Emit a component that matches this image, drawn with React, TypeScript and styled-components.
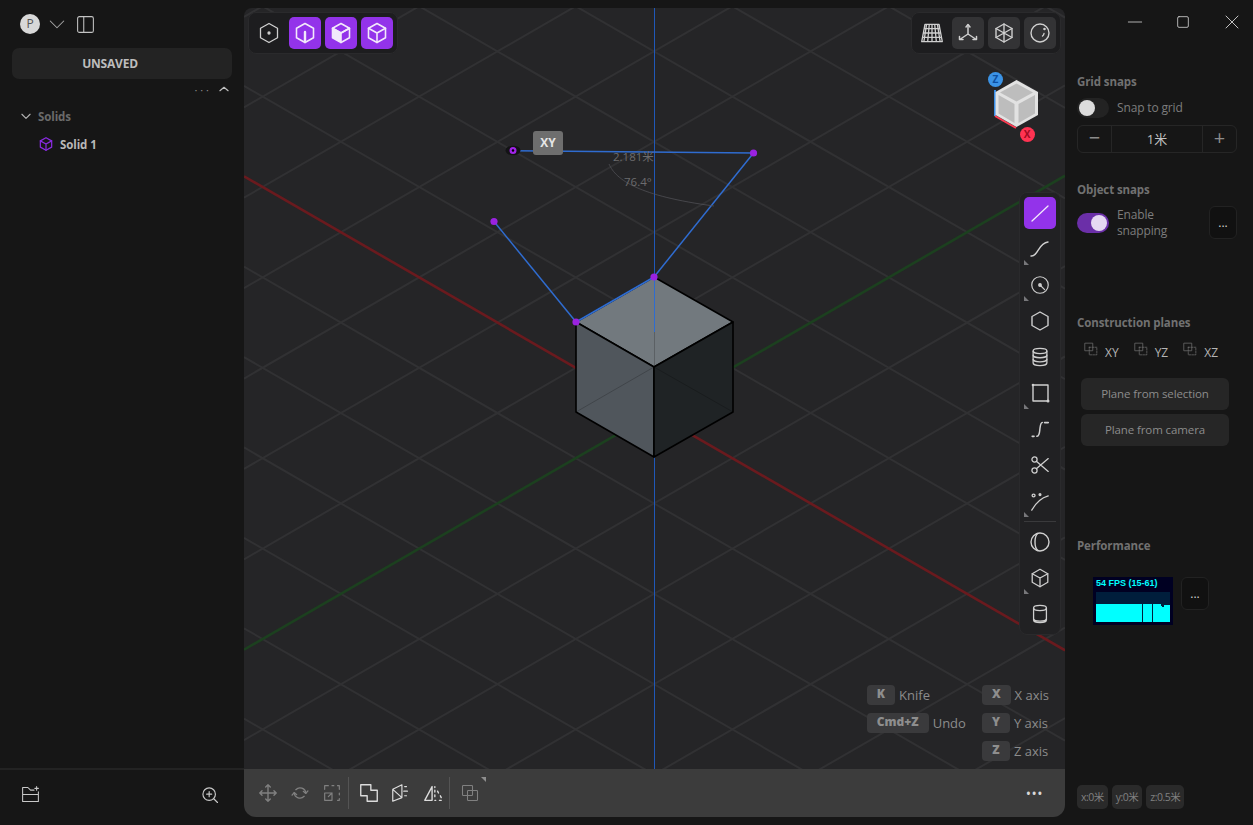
import React, { type ReactElement, type ReactNode } from 'react';
import styled, { createGlobalStyle } from 'styled-components';

const GlobalStyle = createGlobalStyle`
  html, body, #root {
    margin: 0;
    height: 100%;
    background: #161616;
  }
  body {
    overflow: hidden;
    font-family: "Open Sans", "Noto Sans CJK SC", sans-serif;
    color: #d0d0d0;
  }
`;

const Icon = ({ size = 24, sw = 1.5, children }: { size?: number; sw?: number; children: ReactNode }): ReactElement => (
  <svg width={size} height={size} viewBox="0 0 24 24" fill="none" stroke="currentColor" strokeWidth={sw} strokeLinecap="round" strokeLinejoin="round">
    {children}
  </svg>
);

const hex = 'M12 2.5l8.5 4.8v9.4L12 21.5l-8.5-4.8V7.3z';
const cubeEdges = 'M3.5 7.3L12 12l8.5-4.7M12 12v9.5';

// grid + axes of the 3d view, coordinates are local to the viewport
const ORIGIN = { x: 410, y: 405 };
const W = 821;
const H = 761;
const SLOPE = 0.5774;
const STEP = 90.4;

const gridLines = (): ReactElement[] => {
  const lines: ReactElement[] = [];
  for (let k = -12; k <= 12; k++) {
    if (k === 0) continue;
    const off = ORIGIN.y + k * STEP;
    lines.push(
      <line key={`a${k}`} x1={0} y1={off - ORIGIN.x * SLOPE} x2={W} y2={off + (W - ORIGIN.x) * SLOPE} />,
      <line key={`b${k}`} x1={0} y1={off + ORIGIN.x * SLOPE} x2={W} y2={off - (W - ORIGIN.x) * SLOPE} />,
    );
  }
  return lines;
};

const Scene = (): ReactElement => (
  <SceneSvg viewBox={`0 0 ${W} ${H}`}>
    <g stroke="#313133" strokeWidth={2}>{gridLines()}</g>
    <line x1={0} y1={ORIGIN.y - ORIGIN.x * SLOPE} x2={W} y2={ORIGIN.y + (W - ORIGIN.x) * SLOPE} stroke="#6a1a1e" strokeWidth={2.6} />
    <line x1={0} y1={ORIGIN.y + ORIGIN.x * SLOPE} x2={W} y2={ORIGIN.y - (W - ORIGIN.x) * SLOPE} stroke="#1c401f" strokeWidth={2.6} />
    <line x1={410.5} y1={0} x2={410.5} y2={H} stroke="#2058b8" strokeWidth={1} />
    <g stroke="#000" strokeWidth={1.6} strokeLinejoin="round">
      <path d="M410 269L489 314L410 359L332 314z" fill="#72797e" />
      <path d="M332 314L410 359V449L332 404z" fill="#50565c" />
      <path d="M410 359L489 314V404L410 449z" fill="#1f2325" />
    </g>
    <path d="M410.5 269V324" stroke="#2f6cd0" strokeWidth={1} />
    <path d="M410.5 324V359M332 404L410 359L489 404" stroke="#000" strokeWidth={1} opacity={0.2} fill="none" />
    <g stroke="#2f6cd0" strokeWidth={1.5} fill="none">
      <path d="M332 314L410 269" strokeWidth={2} />
      <path d="M250 213.5L332 314" />
      <path d="M410 269L509.5 145" />
      <path d="M270 142.8L509.5 145" />
    </g>
    <path d="M365 156C372 172 395 188 470 198" fill="none" stroke="#55555a" strokeWidth={0.7} />
    <ellipse cx={269} cy={142.5} rx={7.5} ry={4.8} fill="#131315" />
    <circle cx={269} cy={142.5} r={2.4} fill="#000" stroke="#a024e8" strokeWidth={2.2} />
    <g fill="#9a22e0">
      <circle cx={250} cy={213.5} r={3.6} />
      <circle cx={509.5} cy={145} r={3.6} />
      <circle cx={410} cy={269} r={3.6} />
      <circle cx={332} cy={314} r={3.6} />
    </g>
  </SceneSvg>
);

const NavCube = (): ReactElement => (
  <NavCubeBox>
    <svg width="62" height="78" viewBox="0 0 62 78">
      <path d="M7 27V53" stroke="#3b8fe8" strokeWidth={2} />
      <path d="M7 53L28 65" stroke="#ff3b52" strokeWidth={2} />
      <path d="M28.5 17L50 29V52L28.5 64L7.5 52V29z" fill="#e2e2e2" />
      <path d="M28.5 20.5L45 29.5L28.5 38.5L12 29.5z" fill="#bdbdbd" />
      <path d="M10.5 32L26.5 41V60L10.5 50.5z" fill="#bdbdbd" />
      <path d="M30.5 41L47 32V50.5L30.5 60z" fill="#bdbdbd" />
    </svg>
    <AxisBall $bg="#3b93e6" $top={8.5} $left={0} $fg="#0d4fa0">Z</AxisBall>
    <AxisBall $bg="#ff3352" $top={63.5} $left={31.5} $fg="#a00a22">X</AxisBall>
  </NavCubeBox>
);

const App = (): ReactElement => (
  <>
    <GlobalStyle />
    <Shell>
      <LeftPanel>
        <LeftHead>
          <Avatar>P</Avatar>
          <HeadIcon>
            <Icon size={18} sw={1.4}><path d="M3 8l9 9 9-9" /></Icon>
          </HeadIcon>
          <PanelToggle>
            <Icon size={21} sw={1.2}>
              <rect x="3" y="3" width="18" height="18" rx="2" />
              <path d="M10 3v18" />
            </Icon>
          </PanelToggle>
        </LeftHead>
        <UnsavedBar>UNSAVED</UnsavedBar>
        <TreeTools>
          <Dots>· · ·</Dots>
          <Icon size={14} sw={2}><path d="M5 15l7-6 7 6" /></Icon>
        </TreeTools>
        <TreeGroup>
          <Icon size={14} sw={2}><path d="M5 9l7 7 7-7" /></Icon>
          <span>Solids</span>
        </TreeGroup>
        <TreeItem>
          <PurpleIcon>
            <Icon size={16} sw={1.8}>
              <path d={hex} />
              <path d={cubeEdges} />
            </Icon>
          </PurpleIcon>
          <span>Solid 1</span>
        </TreeItem>
        <LeftFoot>
          <FootIcon>
            <Icon size={21} sw={1.2}>
              <path d="M3 20V4h6l3 3h4M3 12h18v8H3zM21 12V9" />
              <path d="M19 3v4M17 5h4" />
            </Icon>
          </FootIcon>
          <FootIcon>
            <Icon size={20} sw={1.4}>
              <circle cx="11" cy="11" r="7.5" />
              <path d="M16.5 16.5L21 21M11 8v6M8 11h6" />
            </Icon>
          </FootIcon>
        </LeftFoot>
      </LeftPanel>

      <Viewport>
        <Canvas>
          <Scene />
          <TopLeftBar>
            <ToolButton>
              <Icon size={24} sw={1.3}>
                <path d={hex} />
                <circle cx="12" cy="12" r="1" fill="currentColor" />
              </Icon>
            </ToolButton>
            <ToolButton $active>
              <Icon size={24} sw={1.6}>
                <path d={hex} />
                <path d="M12 11v10" strokeWidth={2.4} />
              </Icon>
            </ToolButton>
            <ToolButton $active>
              <Icon size={24} sw={1.6}>
                <path d="M12 2.5l8.5 4.8L12 12 3.5 7.3z" />
                <path d="M3.5 7.3L12 12v9.5l-8.5-4.8z" fill="currentColor" />
                <path d="M12 12l8.5-4.7v9.4L12 21.5" />
              </Icon>
            </ToolButton>
            <ToolButton $active>
              <Icon size={24} sw={1.6}>
                <path d={hex} />
                <path d={cubeEdges} />
              </Icon>
            </ToolButton>
          </TopLeftBar>

          <TopRightBar>
            <ToolButton>
              <Icon size={26} sw={1.2}>
                <path d="M5.5 4h13l3 16h-19zM9.5 4L8 20M14.5 4L16 20M12 4v16M7 4L4.5 20M17 4l2.5 16M4.7 8h14.6M4 12h16M3.2 16h17.6" />
              </Icon>
            </ToolButton>
            <ToolButton $soft>
              <Icon size={24} sw={1.5}>
                <path d="M12 4v9M12 13l-7.5 5M12 13l7.5 5" />
                <path d="M10 6l2-2.5L14 6M3.5 15.5v3H7M20.5 15.5v3H17" />
              </Icon>
            </ToolButton>
            <ToolButton $soft>
              <Icon size={24} sw={1.4}>
                <path d="M12 3l8 4.5v9L12 21l-8-4.5v-9z" />
                <path d="M12 3v18M4 7.5l16 9M20 7.5l-16 9" />
              </Icon>
            </ToolButton>
            <ToolButton $soft>
              <Icon size={24} sw={1.4}>
                <circle cx="12" cy="12" r="9" />
                <path d="M16 12.5a4 4 0 0 1-1.5 2.5" />
                <circle cx="16.5" cy="8" r="0.6" fill="currentColor" />
              </Icon>
            </ToolButton>
          </TopRightBar>

          <NavCube />

          <DrawBar>
            <ToolButton $active>
              <Icon size={24} sw={1.3}><path d="M4 20L20 5" /></Icon>
            </ToolButton>
            <ToolButton>
              <Icon size={24} sw={1.4}><path d="M3 19c7 1 7-13 17-14" /></Icon>
              <Corner />
            </ToolButton>
            <ToolButton>
              <Icon size={22} sw={1.3}>
                <circle cx="12" cy="12" r="9" />
                <circle cx="12" cy="12" r="1.4" fill="currentColor" />
                <path d="M12 12l5 5" />
              </Icon>
              <Corner />
            </ToolButton>
            <ToolButton>
              <Icon size={24} sw={1.4}><path d="M12 3l8 4.5v9L12 21l-8-4.5v-9z" /></Icon>
            </ToolButton>
            <ToolButton>
              <Icon size={22} sw={1.4}>
                <ellipse cx="12" cy="5.5" rx="7.5" ry="2.8" />
                <path d="M4.5 5.5v13c0 1.5 3.5 2.8 7.5 2.8s7.5-1.3 7.5-2.8v-13" />
                <path d="M4.5 10c0 1.5 3.5 2.8 7.5 2.8s7.5-1.3 7.5-2.8M4.5 14.5c0 1.5 3.5 2.8 7.5 2.8s7.5-1.3 7.5-2.8" />
              </Icon>
            </ToolButton>
            <ToolButton>
              <Icon size={24} sw={1.4}>
                <path d="M5 4h15v16H5z" />
                <circle cx="5" cy="4" r="0.6" fill="currentColor" />
                <circle cx="20" cy="20" r="0.8" fill="currentColor" />
              </Icon>
              <Corner />
            </ToolButton>
            <ToolButton>
              <Icon size={22} sw={1.6}>
                <path d="M8.5 20c3.5 0 3-6 3.5-9 .4-3 1-6 2.5-6" />
                <path d="M3.5 20h2M17 5h4" strokeWidth={1.8} />
              </Icon>
            </ToolButton>
            <ToolButton>
              <Icon size={22} sw={1.4}>
                <circle cx="6" cy="6" r="2.8" />
                <circle cx="6" cy="18" r="2.8" />
                <path d="M8 8l13 11M8 16L21 5" />
              </Icon>
            </ToolButton>
            <ToolButton>
              <Icon size={22} sw={1.4}>
                <circle cx="5" cy="6" r="1.6" />
                <circle cx="12" cy="5" r="1" fill="currentColor" />
                <path d="M3 22C7 15 12 9 21 6.5" />
              </Icon>
              <Corner />
            </ToolButton>
            <ToolDivider />
            <ToolButton>
              <Icon size={24} sw={1.4}>
                <circle cx="12" cy="12" r="9" />
                <path d="M10 3.3c-4 3-4 14.4 0 17.4" />
              </Icon>
            </ToolButton>
            <ToolButton>
              <Icon size={22} sw={1.4}>
                <path d={hex} />
                <path d={cubeEdges} />
              </Icon>
              <Corner />
            </ToolButton>
            <ToolButton>
              <Icon size={22} sw={1.4}>
                <ellipse cx="12" cy="5.5" rx="7" ry="2.8" />
                <path d="M5 5.5v13c0 1.5 3 2.8 7 2.8s7-1.3 7-2.8v-13M5 17c0 1.5 3 2.8 7 2.8s7-1.3 7-2.8" />
              </Icon>
            </ToolButton>
          </DrawBar>

          <XyTag>XY</XyTag>
          <DimLabel $x={369} $y={141}>2.181米</DimLabel>
          <DimLabel $x={380} $y={166}>76.4°</DimLabel>

          <Hints>
            <HintColumn>
              <HintRow><Key>K</Key><span>Knife</span></HintRow>
              <HintRow><Key>Cmd+Z</Key><span>Undo</span></HintRow>
            </HintColumn>
            <HintColumn>
              <HintRow><Key>X</Key><span>X axis</span></HintRow>
              <HintRow><Key>Y</Key><span>Y axis</span></HintRow>
              <HintRow><Key>Z</Key><span>Z axis</span></HintRow>
            </HintColumn>
          </Hints>
        </Canvas>

        <BottomBar>
          <BottomIcon $dim>
            <Icon size={22} sw={1.5}>
              <path d="M12 3v18M3 12h18M9.5 5.5L12 3l2.5 2.5M9.5 18.5L12 21l2.5-2.5M5.5 9.5L3 12l2.5 2.5M18.5 9.5L21 12l-2.5 2.5" />
            </Icon>
          </BottomIcon>
          <BottomIcon $dim>
            <Icon size={20} sw={1.6}>
              <path d="M7 8a7 7 0 0 1 12 4M17 16a7 7 0 0 1-12-4" />
              <path d="M21.5 9.5L19 12.5l-3-2.5M2.5 14.5L5 11.5l3 2.5" />
            </Icon>
          </BottomIcon>
          <BottomIcon $dim>
            <Icon size={22} sw={1.3}>
              <path d="M4 8V4h4M12 4h2M18 4h2v4M20 12v2M20 18v2h-2M4 12v8h8v-8zM8 16l4-4M9 12h3v3" />
            </Icon>
          </BottomIcon>
          <BarDivider />
          <BottomIcon>
            <Icon size={22} sw={1.5}>
              <path d="M3 3h11v6h7v12H10v-6H3z" />
            </Icon>
          </BottomIcon>
          <BottomIcon>
            <Icon size={22} sw={1.3}>
              <path d="M3 8l10-5v14l-10 4zM3 8l10 9M16 5h2M15 10h4M16 15h2" />
            </Icon>
          </BottomIcon>
          <BottomIcon>
            <Icon size={22} sw={1.5}>
              <path d="M11 5v15H3zM14 5v1M14 9v2M14 14v2M14 20h1M19 20h2M20 15l1 2M17 10l1 2" />
            </Icon>
          </BottomIcon>
          <BarDivider />
          <BottomIcon $dim>
            <Icon size={20} sw={1.3}>
              <rect x="3" y="3" width="12" height="12" rx="1" />
              <rect x="9" y="9" width="12" height="12" rx="1" />
            </Icon>
            <TopCorner />
          </BottomIcon>
          <MoreDots>•••</MoreDots>
        </BottomBar>
      </Viewport>

      <RightPanel>
        <WindowControls>
          <Icon size={16} sw={1.2}><path d="M2 12h20" /></Icon>
          <Icon size={16} sw={1.2}><rect x="4" y="4" width="16" height="16" rx="2" /></Icon>
          <Icon size={18} sw={1.2}><path d="M4 4l16 16M20 4L4 20" /></Icon>
        </WindowControls>

        <Section $height={108}>
          <SectionTitle>Grid snaps</SectionTitle>
          <SnapRow>
            <Toggle />
            <SnapText>Snap to grid</SnapText>
          </SnapRow>
          <Stepper>
            <StepEnd>−</StepEnd>
            <StepValue>1米</StepValue>
            <StepEnd>+</StepEnd>
          </Stepper>
        </Section>

        <Section $height={133}>
          <SectionTitle>Object snaps</SectionTitle>
          <SnapRow>
            <Toggle $on />
            <SnapText>Enable<br />snapping</SnapText>
            <DotsButton $push>...</DotsButton>
          </SnapRow>
        </Section>

        <Section $height={223}>
          <SectionTitle>Construction planes</SectionTitle>
          <PlaneRow>
            {['XY', 'YZ', 'XZ'].map(name => (
              <PlaneItem key={name}>
                <PlaneIcon>
                  <Icon size={14} sw={1.3}>
                    <rect x="2" y="2" width="13" height="13" />
                    <rect x="9" y="9" width="13" height="13" strokeDasharray="3 2" />
                  </Icon>
                </PlaneIcon>
                <span>{name}</span>
              </PlaneItem>
            ))}
          </PlaneRow>
          <WideButton>Plane from selection</WideButton>
          <WideButton>Plane from camera</WideButton>
        </Section>

        <Section $height={210}>
          <SectionTitle>Performance</SectionTitle>
          <PerfRow>
            <PerfBox>
              <PerfText>54 FPS (15-61)</PerfText>
              <PerfGraph>
                <svg width="74" height="30" viewBox="0 0 74 30">
                  <path d="M0 30V12h46v18h1V12h9v18h1V12h8v2h1v1h2v-2h6v17z" fill="#00ffff" />
                </svg>
              </PerfGraph>
            </PerfBox>
            <DotsButton>...</DotsButton>
          </PerfRow>
        </Section>

        <CoordRow>
          <Coord>x:0米</Coord>
          <Coord>y:0米</Coord>
          <Coord>z:0.5米</Coord>
        </CoordRow>
      </RightPanel>
    </Shell>
  </>
);

export default App;

const Shell = styled.div`
  display: grid;
  grid-template-columns: 244px 821px 188px;
  height: 825px;
  width: 1253px;
  background: #161616;
`;

const LeftPanel = styled.aside`
  display: flex;
  flex-direction: column;
  min-width: 0;
`;

const LeftHead = styled.div`
  display: flex;
  align-items: center;
  gap: 8px;
  height: 48px;
  padding-left: 20px;
  color: #9a9a9a;
`;

const Avatar = styled.div`
  width: 20px;
  height: 20px;
  border-radius: 50%;
  background: #d8d8d8;
  color: #555;
  font-size: 12px;
  line-height: 20px;
  text-align: center;
`;

const HeadIcon = styled.div`
  display: flex;
  color: #a8a8a8;
`;

const PanelToggle = styled(HeadIcon)`
  margin-left: 1px;
  color: #c4c4c4;
`;

const UnsavedBar = styled.div`
  margin: 0 12px;
  height: 31px;
  padding-right: 24px;
  box-sizing: border-box;
  border-radius: 7px;
  background: #232323;
  color: #bdbdbd;
  font-size: 12px;
  font-weight: 700;
  letter-spacing: -0.2px;
  line-height: 31px;
  text-align: center;
`;

const TreeTools = styled.div`
  display: flex;
  justify-content: flex-end;
  align-items: center;
  gap: 8px;
  height: 20px;
  padding-right: 13px;
  color: #c0c0c0;
`;

const Dots = styled.span`
  font-size: 11px;
  color: #8a8a8a;
`;

const TreeGroup = styled.div`
  display: flex;
  align-items: center;
  gap: 5px;
  height: 28px;
  margin-top: 3px;
  padding-left: 19px;
  font-size: 11.5px;
  font-weight: 700;
  letter-spacing: -0.1px;
  color: #6a6a6a;
  svg {
    color: #b0b0b0;
  }
`;

const TreeItem = styled.div`
  display: flex;
  align-items: center;
  gap: 6px;
  height: 28px;
  padding-left: 38px;
  font-size: 11.5px;
  font-weight: 700;
  letter-spacing: -0.1px;
  color: #b8b8b8;
`;

const PurpleIcon = styled.span`
  display: flex;
  color: #8a2be2;
`;

const LeftFoot = styled.div`
  display: flex;
  justify-content: space-between;
  align-items: center;
  margin-top: auto;
  height: 57px;
  border-top: 2px solid #232323;
  padding: 0 24px 6px 20px;
  box-sizing: border-box;
`;

const FootIcon = styled.span`
  display: flex;
  color: #c8c8c8;
`;

const Viewport = styled.main`
  display: flex;
  flex-direction: column;
  margin: 8px 0;
  border-radius: 8px 8px 12px 12px;
  overflow: hidden;
`;

const Canvas = styled.div`
  position: relative;
  flex: 1;
  background: #252527;
  overflow: hidden;
`;

const SceneSvg = styled.svg`
  position: absolute;
  inset: 0;
  width: 821px;
  height: 761px;
`;

const FloatBar = styled.div`
  position: absolute;
  display: flex;
  gap: 4px;
  padding: 4px;
  background: #1d1d1f;
  border: 1px solid #2a2a2c;
  border-radius: 8px;
  box-sizing: border-box;
`;

const TopLeftBar = styled(FloatBar)`
  top: 4px;
  left: 4px;
`;

const TopRightBar = styled(FloatBar)`
  top: 4px;
  right: 4px;
`;

const DrawBar = styled(FloatBar)`
  top: 184px;
  right: 4px;
  flex-direction: column;
  background: #212123;
`;

const ToolButton = styled.div<{ $active?: boolean; $soft?: boolean }>`
  position: relative;
  display: flex;
  align-items: center;
  justify-content: center;
  width: 32px;
  height: 32px;
  border-radius: 5px;
  color: ${p => (p.$active ? '#f2e8fb' : '#cfcfcf')};
  background: ${p => (p.$active ? '#9333ea' : p.$soft ? '#333335' : 'transparent')};
`;

const Corner = styled.span`
  position: absolute;
  left: 0;
  bottom: 0;
  width: 0;
  height: 0;
  border-left: 5px solid #77777a;
  border-top: 5px solid transparent;
`;

const ToolDivider = styled.div`
  height: 1px;
  background: #3a3a3c;
`;

const NavCubeBox = styled.div`
  position: absolute;
  top: 55px;
  right: 15px;
  width: 62px;
  height: 79px;
  svg {
    display: block;
  }
`;

const AxisBall = styled.span<{ $bg: string; $fg: string; $top: number; $left: number }>`
  position: absolute;
  top: ${p => p.$top}px;
  left: ${p => p.$left}px;
  width: 15px;
  height: 15px;
  border-radius: 50%;
  background: ${p => p.$bg};
  color: ${p => p.$fg};
  font-size: 10px;
  font-weight: 700;
  line-height: 15px;
  text-align: center;
`;

const XyTag = styled.div`
  position: absolute;
  top: 123px;
  left: 289px;
  width: 30px;
  height: 24px;
  border-radius: 3px;
  background: #6e6e6e;
  color: #e6e6e6;
  font-size: 12px;
  font-weight: 700;
  line-height: 24px;
  text-align: center;
`;

const DimLabel = styled.span<{ $x: number; $y: number }>`
  position: absolute;
  top: ${p => p.$y}px;
  left: ${p => p.$x}px;
  font-size: 11.5px;
  line-height: 16px;
  color: #6c6c6e;
`;

const Hints = styled.div`
  position: absolute;
  right: 16px;
  bottom: 8px;
  display: flex;
  gap: 16px;
  font-size: 13px;
  color: #8c8c8c;
`;

const HintColumn = styled.div`
  display: flex;
  flex-direction: column;
  gap: 8px;
`;

const HintRow = styled.div`
  display: flex;
  align-items: center;
  gap: 4px;
  height: 20px;
`;

const Key = styled.span`
  min-width: 8px;
  height: 20px;
  padding: 0 10px;
  border-radius: 4px;
  background: #3a3a3c;
  color: #8e8e8e;
  font-size: 12px;
  font-weight: 800;
  line-height: 18px;
  text-align: center;
`;

const BottomBar = styled.div`
  display: flex;
  align-items: center;
  height: 48px;
  padding: 0 8px;
  background: #3c3c3c;
  flex-shrink: 0;
`;

const BottomIcon = styled.span<{ $dim?: boolean }>`
  position: relative;
  display: flex;
  align-items: center;
  justify-content: center;
  width: 32px;
  height: 32px;
  color: ${p => (p.$dim ? '#808080' : '#dcdcdc')};
`;

const TopCorner = styled.span`
  position: absolute;
  top: 0;
  right: 0;
  width: 0;
  height: 0;
  border-left: 5px solid transparent;
  border-top: 5px solid #8e8e8e;
`;

const BarDivider = styled.div`
  width: 1px;
  height: 32px;
  margin: 0 4px 0 0;
  background: #545454;
`;

const MoreDots = styled.span`
  margin-left: auto;
  margin-right: 14px;
  font-size: 14px;
  letter-spacing: 0.5px;
  color: #d8d8d8;
`;

const RightPanel = styled.aside`
  display: flex;
  flex-direction: column;
  padding: 0 16px 0 12px;
  min-width: 0;
`;

const WindowControls = styled.div`
  display: flex;
  justify-content: flex-end;
  align-items: center;
  gap: 32px;
  height: 46px;
  margin-right: -4px;
  padding-bottom: 2px;
  box-sizing: border-box;
  color: #d6d6d6;
`;

const Section = styled.section<{ $height: number }>`
  display: flex;
  flex-direction: column;
  height: ${p => p.$height}px;
  padding-top: 27px;
  box-sizing: border-box;
`;

const SectionTitle = styled.h3`
  margin: 0 0 7px;
  font-size: 11.5px;
  font-weight: 700;
  letter-spacing: -0.1px;
  line-height: 18px;
  color: #717171;
`;

const SnapRow = styled.div`
  display: flex;
  align-items: center;
  gap: 8px;
  margin-bottom: 7px;
`;

const Toggle = styled.div<{ $on?: boolean }>`
  position: relative;
  flex-shrink: 0;
  width: 32px;
  height: 20px;
  border-radius: 10px;
  background: ${p => (p.$on ? '#6b2fa8' : '#232323')};
  &::after {
    content: '';
    position: absolute;
    top: 2px;
    left: ${p => (p.$on ? '14px' : '2px')};
    width: 16px;
    height: 16px;
    border-radius: 50%;
    background: ${p => (p.$on ? '#e6d8f2' : '#dcdcdc')};
  }
`;

const SnapText = styled.span`
  font-size: 12px;
  letter-spacing: -0.15px;
  line-height: 16px;
  color: #7d7d7d;
`;

const Stepper = styled.div`
  display: grid;
  grid-template-columns: 33px 1fr 33px;
  height: 28px;
  border: 1px solid #262626;
  border-radius: 6px;
  box-sizing: border-box;
`;

const StepEnd = styled.span`
  text-align: center;
  line-height: 24px;
  font-size: 20px;
  color: #8c8c8c;
`;

const StepValue = styled.span`
  border: solid #262626;
  border-width: 0 1px;
  text-align: center;
  font-size: 13px;
  line-height: 26px;
  color: #c0c0c0;
`;

const DotsButton = styled.div<{ $push?: boolean }>`
  flex-shrink: 0;
  margin-left: ${p => (p.$push ? 'auto' : '0')};
  width: 28px;
  height: 33px;
  border: 1px solid #222;
  border-radius: 6px;
  background: #111;
  box-sizing: border-box;
  color: #d0d0d0;
  font-size: 12px;
  line-height: 32px;
  text-align: center;
`;

const PlaneRow = styled.div`
  display: flex;
  gap: 15px;
  padding-left: 7px;
  margin: 3px 0 18px;
`;

const PlaneItem = styled.div`
  display: flex;
  align-items: flex-end;
  gap: 7px;
  height: 18px;
  font-size: 12px;
  line-height: 15px;
  color: #b4b4b4;
`;

const PlaneIcon = styled.span`
  display: flex;
  align-self: flex-start;
  color: #6e6e6e;
`;

const WideButton = styled.div`
  height: 32px;
  margin: 0 0 4px 4px;
  width: 148px;
  border-radius: 6px;
  background: #262626;
  color: #8c8c8c;
  font-size: 11.5px;
  letter-spacing: -0.1px;
  line-height: 32px;
  text-align: center;
`;

const PerfRow = styled.div`
  display: flex;
  align-items: flex-start;
  gap: 8px;
  padding-left: 16px;
  margin-top: 15px;
`;

const PerfBox = styled.div`
  width: 80px;
  height: 48px;
  padding: 0 3px;
  background: #000022;
  box-sizing: border-box;
`;

const PerfText = styled.div`
  height: 15px;
  font-family: "Liberation Sans", sans-serif;
  font-size: 9px;
  font-weight: 700;
  line-height: 13px;
  color: #00ffff;
  white-space: nowrap;
`;

const PerfGraph = styled.div`
  height: 30px;
  background: #001e3c;
  svg {
    display: block;
  }
`;

const CoordRow = styled.div`
  display: flex;
  gap: 4px;
  margin-top: auto;
  margin-bottom: 16px;
`;

const Coord = styled.span`
  height: 24px;
  padding: 0 4px;
  border-radius: 5px;
  background: #2a2a2a;
  color: #808080;
  font-size: 10.5px;
  letter-spacing: -0.5px;
  line-height: 24px;
`;
